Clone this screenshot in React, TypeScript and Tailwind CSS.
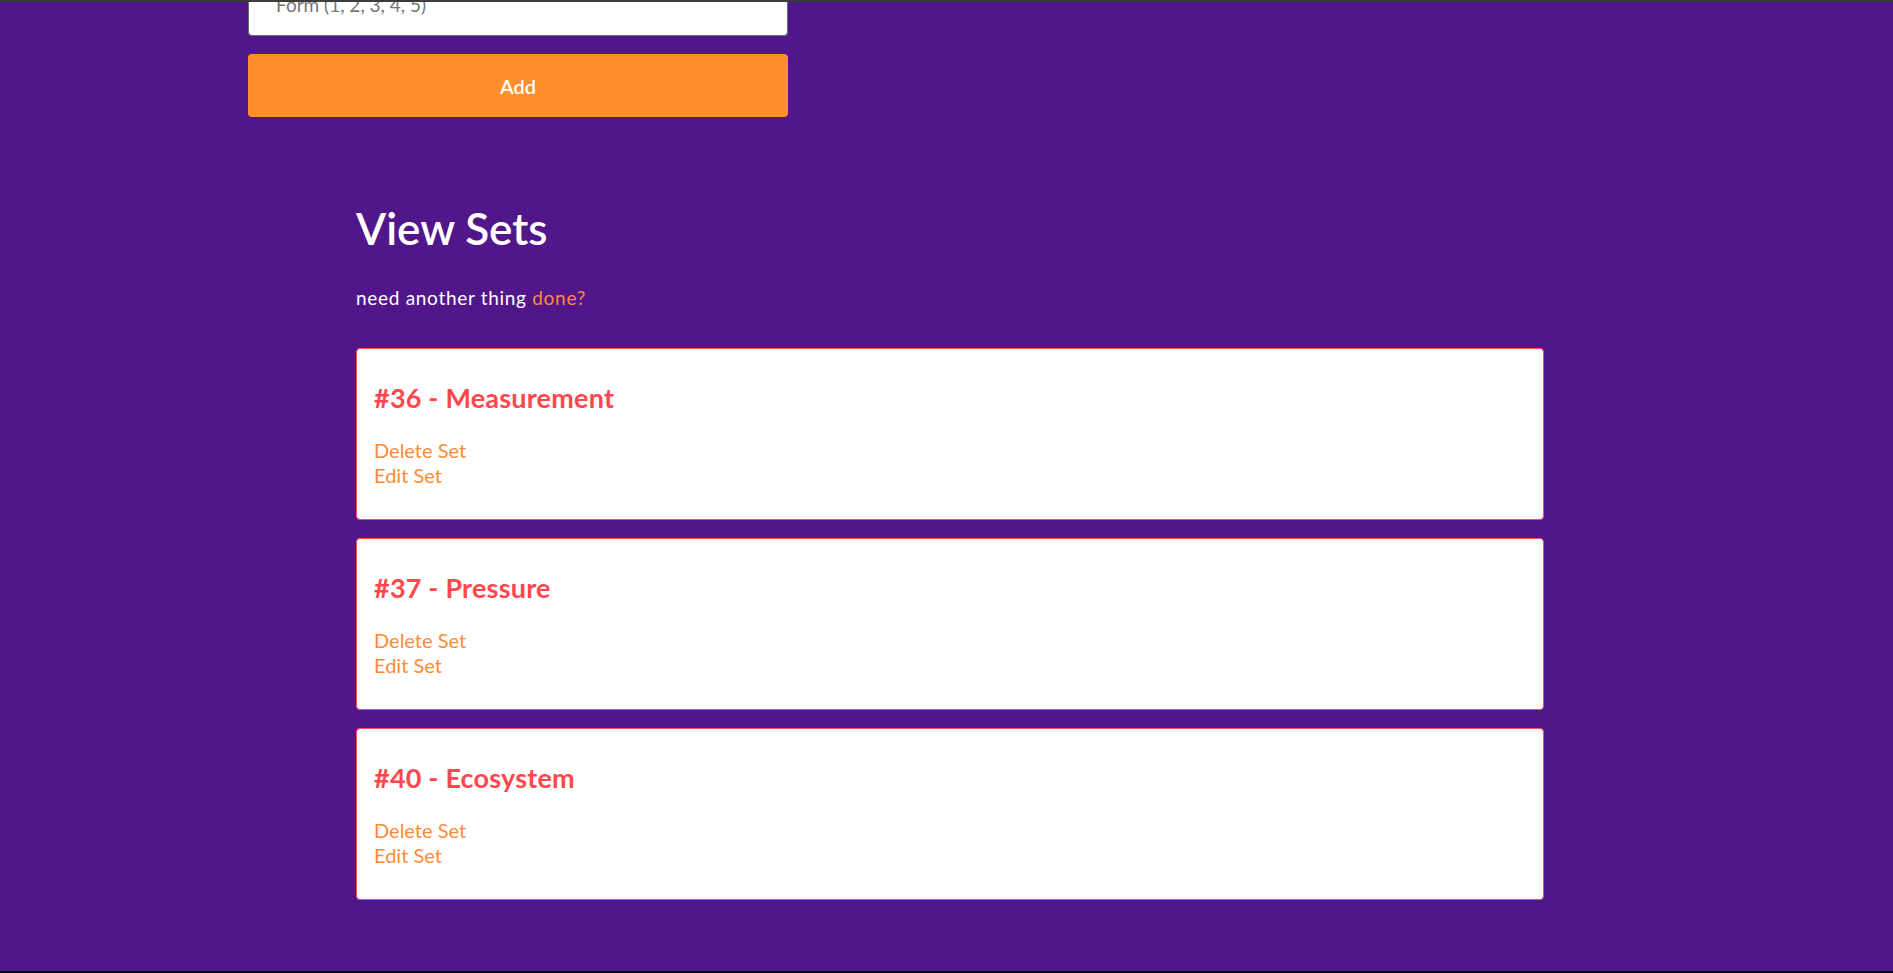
import React from 'react'

const sets = [
  { id: 36, name: 'Measurement' },
  { id: 37, name: 'Pressure' },
  { id: 40, name: 'Ecosystem' },
]

const SetCard = ({ id, name }: { id: number; name: string }) => {
  return (
    <div className="rounded-[4px] border border-[#ff4a4f] bg-white px-[17px] pt-[33px] pb-[31px]">
      <h2 className="text-[27px] leading-[32px] font-bold tracking-[0.2px] text-[#ff474d]">
        #{id} - {name}
      </h2>
      <div className="mt-[24px] flex flex-col items-start text-[20px] leading-[25px] text-[#ff8a36]">
        <a href="#">Delete Set</a>
        <a href="#">Edit Set</a>
      </div>
    </div>
  )
}

export default function App() {
  return (
    <div
      className="flex min-h-screen flex-col bg-[#52168b]"
      style={{ fontFamily: 'Lato, "Noto Sans", sans-serif' }}
    >
      <div className="h-[2px] bg-[#3c3c3c]" />
      <div className="ml-[248px] w-[540px]">
        <div className="flex h-[34px] flex-col justify-end overflow-hidden">
          <input
            className="h-[63px] w-full shrink-0 rounded-[4px] border border-[#6b6b6b] bg-white px-[27px] text-[19px] text-gray-800 placeholder:text-[#767676] focus:outline-none"
            placeholder="Form (1, 2, 3, 4, 5)"
          />
        </div>
        <button className="mt-[18px] h-[63px] w-full rounded-[4px] bg-[#ff8f2b] text-[20px] font-semibold text-white">
          Add
        </button>
      </div>

      <section className="mt-[84px] ml-[356px] w-[1188px] pb-[70px]">
        <h1 className="text-[44px] leading-[54px] font-semibold text-white">View Sets</h1>
        <p className="mt-[29px] text-[19px] leading-[27px] tracking-[0.7px] text-white">
          need another thing <a href="#" className="text-[#ff8a36]">done?</a>
        </p>
        <div className="mt-[37px] flex flex-col gap-[18px]">
          {sets.map((s) => (
            <SetCard key={s.id} id={s.id} name={s.name} />
          ))}
        </div>
      </section>
      <div className="mt-auto h-[2px] bg-black" />
    </div>
  )
}
